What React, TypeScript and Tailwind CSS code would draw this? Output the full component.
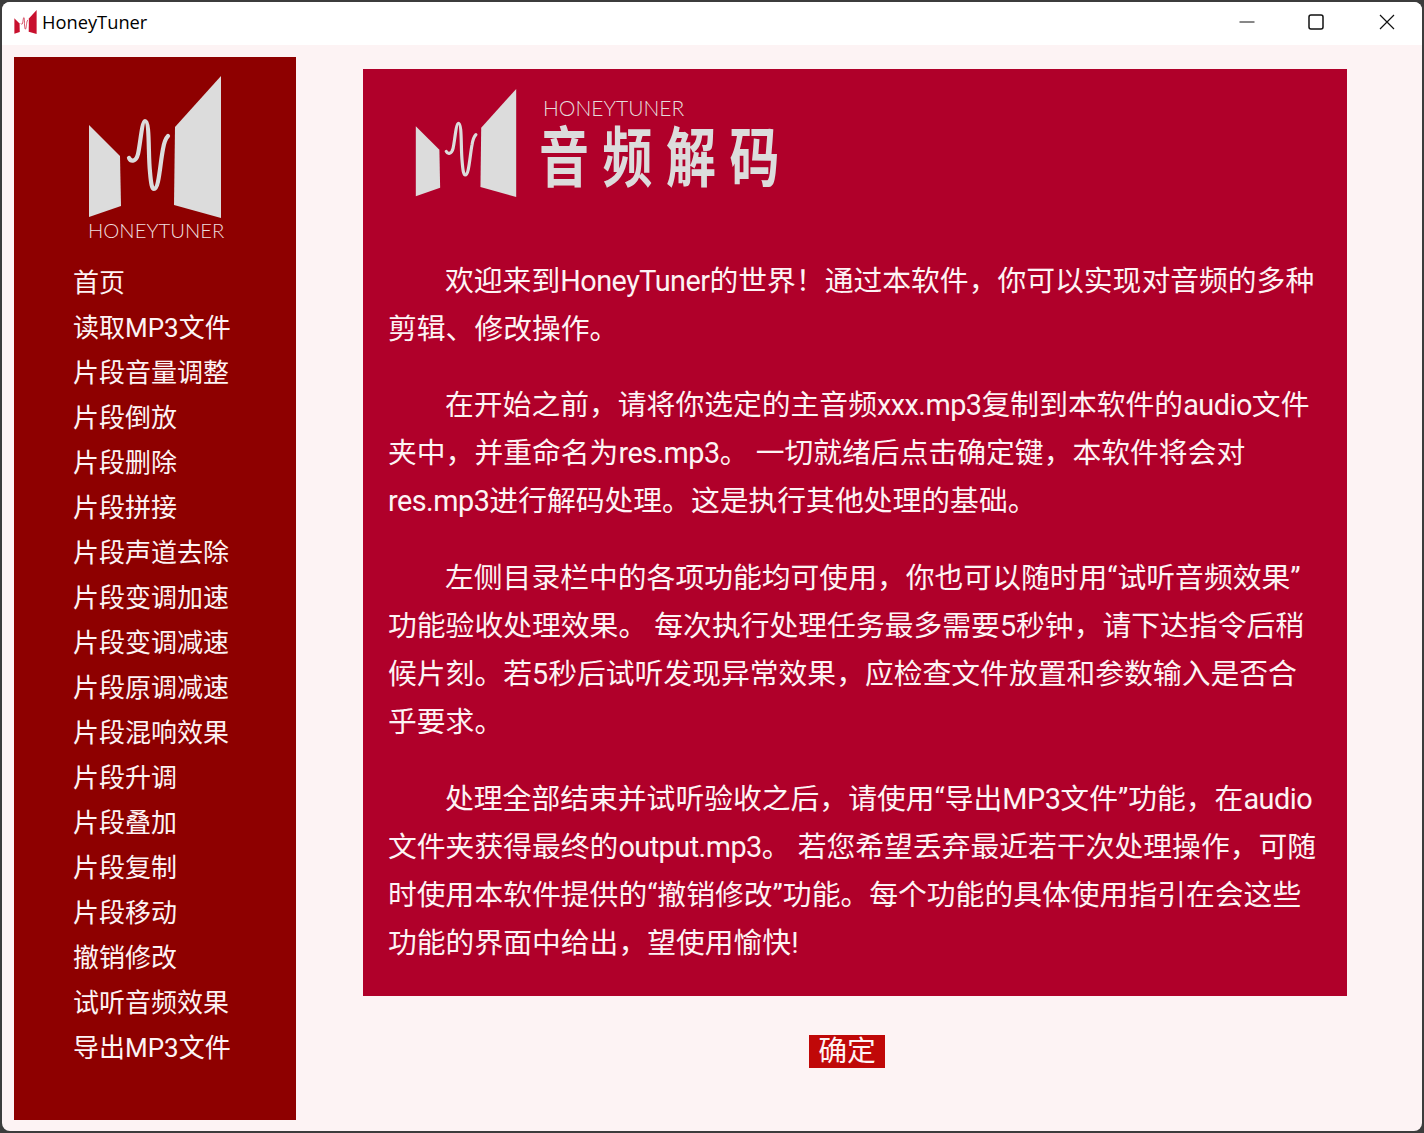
import React from 'react';

const menuItems = [
  '首页', '读取MP3文件', '片段音量调整', '片段倒放', '片段删除', '片段拼接', '片段声道去除',
  '片段变调加速', '片段变调减速', '片段原调减速', '片段混响效果', '片段升调', '片段叠加',
  '片段复制', '片段移动', '撤销修改', '试听音频效果', '导出MP3文件',
];

const paragraphs = [
  ['欢迎来到HoneyTuner的世界！通过本软件，你可以实现对音频的多种', '剪辑、修改操作。'],
  ['在开始之前，请将你选定的主音频xxx.mp3复制到本软件的audio文件', '夹中，并重命名为res.mp3。 一切就绪后点击确定键，本软件将会对', 'res.mp3进行解码处理。这是执行其他处理的基础。'],
  ['左侧目录栏中的各项功能均可使用，你也可以随时用“试听音频效果”', '功能验收处理效果。 每次执行处理任务最多需要5秒钟，请下达指令后稍', '候片刻。若5秒后试听发现异常效果，应检查文件放置和参数输入是否合', '乎要求。'],
  ['处理全部结束并试听验收之后，请使用“导出MP3文件”功能，在audio', '文件夹获得最终的output.mp3。 若您希望丢弃最近若干次处理操作，可随', '时使用本软件提供的“撤销修改”功能。每个功能的具体使用指引在会这些', '功能的界面中给出，望使用愉快!'],
];

function Logo({ className, fill }: { className: string; fill: string }) {
  return (
    <svg viewBox="0 0 134 142" className={className}>
      <path d="M1 49 L32 80 L33 130 L1 141 Z" fill={fill} />
      <path d="M87 51 L133 0 L133 142 L86 129 Z" fill={fill} />
      <path
        d="M41 82 C43 86 48 86 50 78 C52 70 54 45 57 45 C62 45 60 78 62 96 C63 108 64 113 66 113 C71 113 72 88 75 73 C76 67 78 62 80 60"
        fill="none"
        stroke={fill}
        strokeWidth="4.2"
        strokeLinecap="round"
      />
    </svg>
  );
}

// latin runs sit a little tighter than Roboto's default
function Line({ text }: { text: string }) {
  return (
    <>
      {text.split(/([A-Za-z][A-Za-z.0-9]*)/).map((part, i) =>
        i % 2 === 1 ? (
          <span key={i} className="tracking-[-0.5px]">
            {part}
          </span>
        ) : (
          part
        ),
      )}
    </>
  );
}

export default function App() {
  return (
    <div className="h-[1133px] w-[1424px] overflow-hidden bg-[#3c3c3c] p-[2px] font-['Roboto','Noto_Sans_CJK_SC',sans-serif]">
      <div className="flex h-full flex-col overflow-hidden rounded-lg bg-[#fdf3f4]">
        {/* Title bar */}
        <header className="flex h-[43px] shrink-0 items-center bg-white pb-[3px] pl-3">
          <Logo className="h-[24px] w-[23px]" fill="#c8102e" />
          <span className="ml-[5px] font-['Open_Sans',sans-serif] text-[18.3px] text-black">HoneyTuner</span>
          <div className="ml-auto flex items-center">
            <svg width="16" height="16" viewBox="0 0 16 16" className="mr-[53px]">
              <path d="M0.5 8 H15.5" stroke="#111" strokeWidth="1" />
            </svg>
            <svg width="16" height="16" viewBox="0 0 16 16" className="mr-[55px]">
              <rect x="1" y="1" width="14" height="14" rx="2" fill="none" stroke="#111" strokeWidth="1.5" />
            </svg>
            <svg width="16" height="16" viewBox="0 0 16 16" className="mr-[27px]">
              <path d="M1 1 L15 15 M15 1 L1 15" stroke="#111" strokeWidth="1.2" />
            </svg>
          </div>
        </header>

        <div className="flex flex-1 pt-3 pl-3">
          {/* Sidebar */}
          <aside className="flex h-[1063px] w-[282px] shrink-0 flex-col bg-[#8e0000] pt-[19px] pl-[59px]">
            <Logo className="ml-[15px] h-[142px] w-[134px]" fill="#dcdcdc" />
            <div className="-mt-[1px] ml-[15px] h-[27px] font-['Lato',sans-serif] text-[20.3px] leading-[27px] font-light text-[#efdede]">HONEYTUNER</div>
            <nav className="mt-[17px] flex flex-col">
              {menuItems.map((item) => (
                <div key={item} className="h-[45px] text-[26px] leading-[45px] whitespace-nowrap text-[#fdf3f4]">
                  {item}
                </div>
              ))}
            </nav>
          </aside>

          {/* Main */}
          <main className="ml-[67px] flex flex-col pt-3">
            <section className="h-[927px] w-[984px] bg-[#b0002a] pt-[20px] pl-[25px]">
              <div className="flex h-[120px] items-start pl-[27px]">
                <Logo className="h-[108px] w-[102px]" fill="#dcdcdc" />
                <div className="ml-[26px] flex flex-col">
                  <span className="h-[26px] font-['Lato',sans-serif] text-[21px] leading-[38px] font-light text-[#e6dcdc]">HONEYTUNER</span>
                  <span className="mt-[12px] -ml-[4px] scale-y-[1.3] text-[50px] leading-[64px] font-bold tracking-[13.5px] whitespace-nowrap text-[#dcdcdc]">音频解码</span>
                </div>
              </div>
              <div className="mt-[47.7px] flex flex-col gap-[28.8px] text-[28.8px] leading-[48px] text-[#fdf3f4]">
                {paragraphs.map((lines, i) => (
                  <p key={i}>
                    {lines.map((line, j) => (
                      <span key={j} className={j === 0 ? 'block pl-[57px] whitespace-nowrap' : 'block whitespace-nowrap'}>
                        <Line text={line} />
                      </span>
                    ))}
                  </p>
                ))}
              </div>
            </section>
            <button className="mt-[39px] ml-[446px] h-[33px] w-[76px] bg-[#c00808] text-[28.8px] leading-[33px] text-[#fdf3f4]">确定</button>
          </main>
        </div>
      </div>
    </div>
  );
}
